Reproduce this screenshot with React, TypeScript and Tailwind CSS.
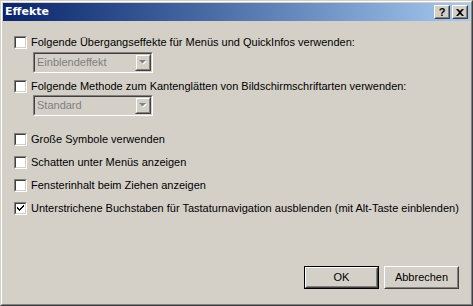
const face = "#d4d0c8";

function Check({ checked }: { checked?: boolean }) {
  return (
    <span className="w-[13px] h-[13px] shrink-0 border border-t-[#808080] border-l-[#808080] border-r-white border-b-white">
      <span className="block w-full h-full bg-white border border-t-[#404040] border-l-[#404040] border-r-[#d4d0c8] border-b-[#d4d0c8]">
        {checked && (
          <svg width="9" height="9" viewBox="0 0 9 9" className="block">
            <path d="M1 3h1v1h1v1h1V4h1V3h1V2h1V1h1v2H7v1H6v1H5v1H4v1H3V6H2V5H1z" fill="#000" />
          </svg>
        )}
      </span>
    </span>
  );
}

function Row({ label, checked, className }: { label: string; checked?: boolean; className?: string }) {
  return (
    <div className={`flex items-center h-[13px] ml-[11px] ${className ?? ""}`}>
      <Check checked={checked} />
      <span className="ml-[4px] text-[11px] leading-[13px] text-black whitespace-nowrap">{label}</span>
    </div>
  );
}

function Combo({ value, className }: { value: string; className?: string }) {
  return (
    <div className={`ml-[30px] w-[120px] h-[21px] border border-t-[#808080] border-l-[#808080] border-r-white border-b-white ${className ?? ""}`}>
      <div className="h-full flex border border-t-[#404040] border-l-[#404040] border-r-[#d4d0c8] border-b-[#d4d0c8] bg-[#d4d0c8]">
        <span className="flex-1 pl-[2px] text-[11px] leading-[17px] text-[#808080]">{value}</span>
        <span className="w-[16px] h-[17px] border border-t-[#d4d0c8] border-l-[#d4d0c8] border-r-[#404040] border-b-[#404040]">
          <span className="h-full flex items-center justify-center border border-t-white border-l-white border-r-[#808080] border-b-[#808080]">
            <svg width="8" height="5" viewBox="0 0 8 5" className="block">
              <path d="M1 1h7L4.5 4.5z" fill="#fff" />
              <path d="M0 0h7L3.5 3.5z" fill="#808080" />
            </svg>
          </span>
        </span>
      </div>
    </div>
  );
}

function Btn({ label, isDefault, className }: { label: string; isDefault?: boolean; className?: string }) {
  const inner = (
    <div className="h-full border border-t-white border-l-white border-r-[#404040] border-b-[#404040]">
      <div className="h-full flex items-center justify-center border border-t-[#d4d0c8] border-l-[#d4d0c8] border-r-[#808080] border-b-[#808080] text-[11px] text-black">
        {label}
      </div>
    </div>
  );
  return (
    <div className={`w-[75px] h-[23px] ${isDefault ? "border border-black" : ""} ${className ?? ""}`}>
      {inner}
    </div>
  );
}

export default function App() {
  return (
    <div
      className="w-[473px] h-[306px] border border-t-[#d4d0c8] border-l-[#d4d0c8] border-r-[#404040] border-b-[#404040] bg-[#d4d0c8]"
      style={{ fontFamily: '"Liberation Sans", Arial, sans-serif', backgroundColor: face }}
    >
      <div className="h-full border border-t-white border-l-white border-r-[#808080] border-b-[#808080] p-px flex flex-col">
        <div className="h-[18px] flex items-center bg-gradient-to-r from-[#0a246a] to-[#a6caf0] pl-[2px] pr-[2px]">
          <span
            className="text-white text-[11px] font-bold flex-1"
            style={{ fontFamily: '"DejaVu Sans", Verdana, sans-serif' }}
          >
            Effekte
          </span>
          <div className="w-[16px] h-[14px] border border-t-white border-l-white border-r-[#404040] border-b-[#404040] bg-[#d4d0c8]">
            <div className="h-full flex items-center justify-center border border-t-[#d4d0c8] border-l-[#d4d0c8] border-r-[#808080] border-b-[#808080] text-[11px] font-bold leading-none text-black">
              ?
            </div>
          </div>
          <div className="ml-[2px] w-[16px] h-[14px] border border-t-white border-l-white border-r-[#404040] border-b-[#404040] bg-[#d4d0c8]">
            <div className="h-full flex items-center justify-center border border-t-[#d4d0c8] border-l-[#d4d0c8] border-r-[#808080] border-b-[#808080]">
              <svg width="8" height="7" viewBox="0 0 8 7" className="block">
                <path d="M0 0h2l2 2 2-2h2L5 3.5 8 7H6L4 5 2 7H0l3-3.5z" fill="#000" />
              </svg>
            </div>
          </div>
        </div>
        <div className="flex-1 flex flex-col">
          <Row className="mt-[15px]" label="Folgende Übergangseffekte für Menüs und QuickInfos verwenden:" />
          <Combo className="mt-[3px]" value="Einblendeffekt" />
          <Row className="mt-[7px]" label="Folgende Methode zum Kantenglätten von Bildschirmschriftarten verwenden:" />
          <Combo className="mt-[2px]" value="Standard" />
          <Row className="mt-[17px]" label="Große Symbole verwenden" />
          <Row className="mt-[10px]" label="Schatten unter Menüs anzeigen" />
          <Row className="mt-[10px]" label="Fensterinhalt beim Ziehen anzeigen" />
          <Row className="mt-[10px]" checked label="Unterstrichene Buchstaben für Tastaturnavigation ausblenden (mit Alt-Taste einblenden)" />
          <div className="mt-auto mb-[14px] flex justify-end pr-[11px] gap-[5px]">
            <Btn isDefault label="OK" />
            <Btn label="Abbrechen" />
          </div>
        </div>
      </div>
    </div>
  );
}
